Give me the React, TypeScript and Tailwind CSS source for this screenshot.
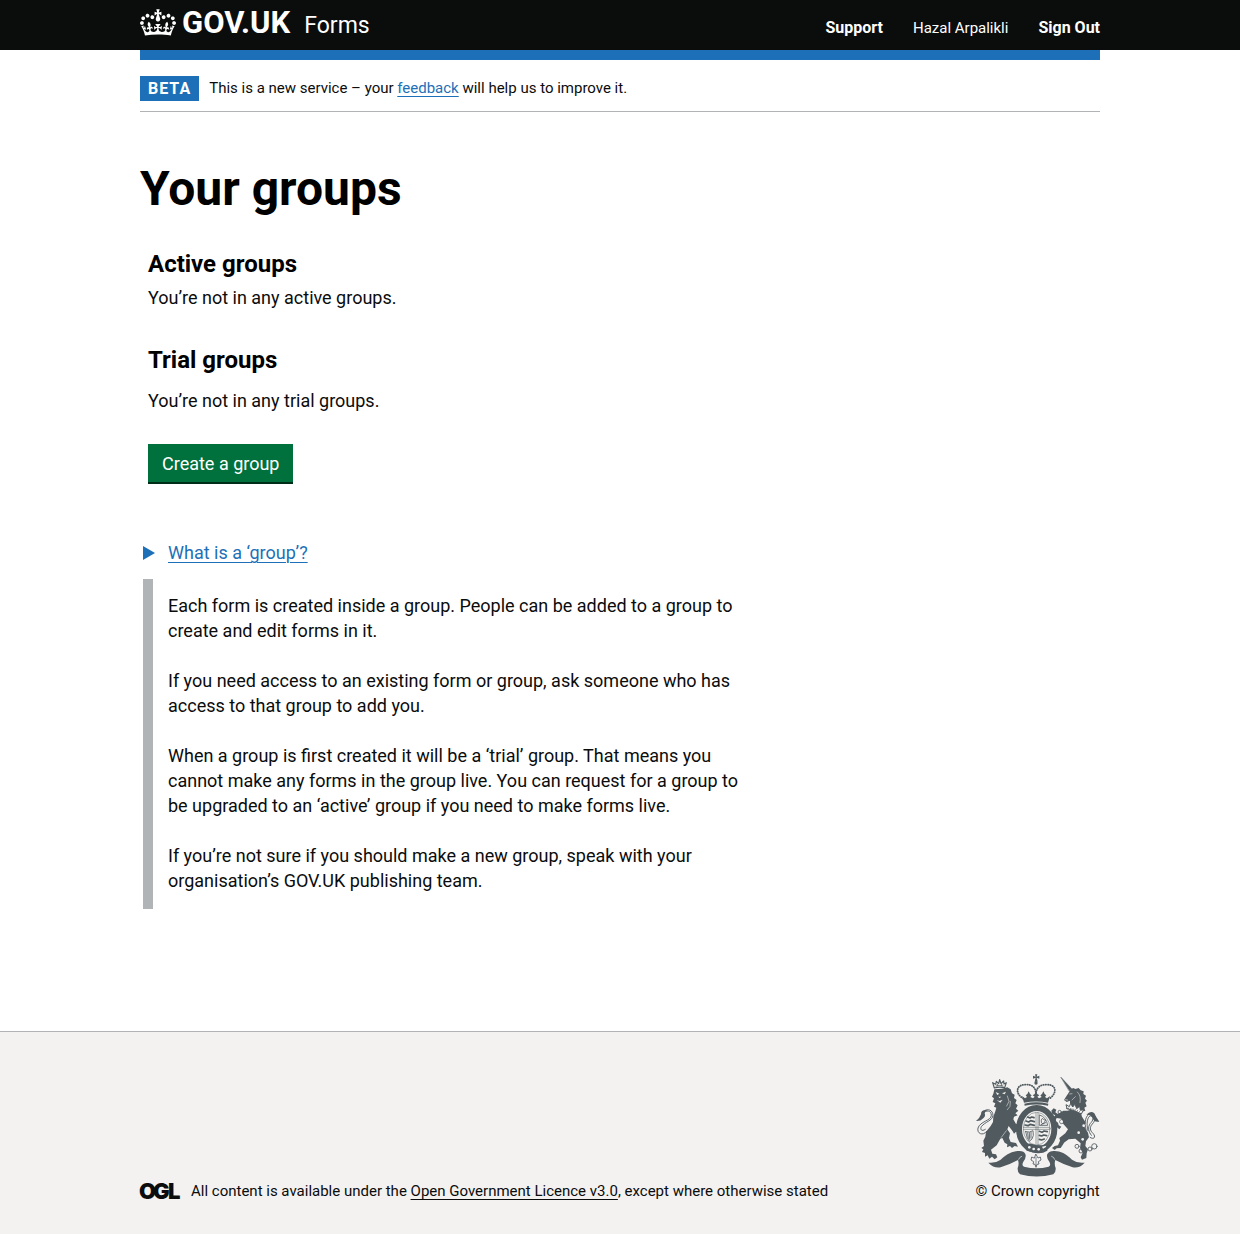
import React from "react";

function Crown() {
  return (
    <svg aria-hidden="true" viewBox="0 0 132 97" className="h-[27px] w-9 fill-white">
      <path
        fillRule="evenodd"
        d="M25 30.2c3.5 1.5 7.7-.2 9.1-3.7 1.5-3.6-.2-7.8-3.9-9.2-3.6-1.4-7.6.3-9.1 3.9-1.4 3.5.3 7.5 3.9 9zM9 39.5c3.6 1.5 7.8-.2 9.2-3.7 1.5-3.6-.2-7.8-3.9-9.1-3.6-1.5-7.6.2-9.1 3.8-1.4 3.5.3 7.5 3.8 9zM4.4 57.2c3.5 1.5 7.7-.2 9.1-3.8 1.5-3.6-.2-7.7-3.9-9.1-3.5-1.5-7.6.3-9.1 3.8-1.4 3.5.3 7.6 3.9 9.1zm38.3-21.4c3.5 1.5 7.7-.2 9.1-3.8 1.5-3.6-.2-7.7-3.9-9.1-3.6-1.5-7.6.3-9.1 3.8-1.3 3.6.4 7.7 3.9 9.1zm64.4-5.6c-3.6 1.5-7.8-.2-9.1-3.7-1.5-3.6.2-7.8 3.8-9.2 3.6-1.4 7.7.3 9.2 3.9 1.3 3.5-.4 7.5-3.9 9zm15.9 9.3c-3.6 1.5-7.7-.2-9.1-3.7-1.5-3.6.2-7.8 3.7-9.1 3.6-1.5 7.7.2 9.2 3.8 1.5 3.5-.3 7.5-3.8 9zm4.7 17.7c-3.6 1.5-7.8-.2-9.2-3.8-1.5-3.6.2-7.7 3.9-9.1 3.6-1.5 7.7.3 9.2 3.8 1.3 3.5-.4 7.6-3.9 9.1zM89.3 35.8c-3.6 1.5-7.8-.2-9.2-3.8-1.4-3.6.2-7.7 3.9-9.1 3.6-1.5 7.7.3 9.2 3.8 1.4 3.6-.3 7.7-3.9 9.1zM69.7 17.7l8.9 4.7V9.3l-8.9 2.8c-.2-.3-.5-.6-.9-.9L72.4 0H59.6l3.5 11.2c-.3.3-.6.5-.9.9l-8.8-2.8v13.1l8.8-4.7c.3.3.6.7.9.9l-5 15.4v.1c-.2.8-.4 1.6-.4 2.4 0 4.1 3.1 7.5 7 8.1h.2c.3 0 .7.1 1 .1.4 0 .7 0 1-.1h.2c4-.6 7.1-4.1 7.1-8.1 0-.8-.1-1.7-.4-2.4V34l-5.1-15.4c.4-.2.7-.6 1-.9zM66 92.8c16.9 0 32.8 1.1 47.1 3.2 4-16.9 8.9-26.7 14-33.5l-9.6-3.4c1 4.9 1.1 7.2 0 10.2-1.5-1.4-3-4.3-4.2-8.7L108.6 76c2.8-2 5-3.2 7.5-3.3-4.4 9.4-10 11.9-13.6 11.2-4.3-.8-6.3-4.6-5.6-7.9 1-4.7 5.7-5.9 8-.5 4.3-8.7-3-11.4-7.6-8.8 7.1-7.2 7.9-13.5 2.1-21.1-8 6.1-8.1 12.3-4.5 20.8-4.7-5.4-12.1-2.5-9.5 6.2 3.4-5.2 7.9-2 7.2 3.1-.6 4.3-6.4 7.8-13.5 7.2-10.3-.9-10.9-8-11.2-13.8 2.5-.5 7.1 1.8 11 7.3L80.2 60c-4.1 4.4-8 5.3-12.3 5.4 1.4-4.4 8-11.6 8-11.6H55.5s6.4 7.2 7.9 11.6c-4.2-.1-8-1-12.3-5.4l1.4 16.4c3.9-5.5 8.5-7.7 10.9-7.3-.3 5.8-.9 12.8-11.1 13.8-7.2.6-12.9-2.9-13.5-7.2-.7-5 3.8-8.3 7.1-3.1 2.7-8.7-4.6-11.6-9.4-6.2 3.7-8.5 3.6-14.7-4.6-20.8-5.8 7.6-5 13.9 2.2 21.1-4.7-2.6-11.9.1-7.7 8.8 2.3-5.5 7.1-4.2 8.1.5.7 3.3-1.3 7.1-5.7 7.9-3.5.7-9-1.8-13.5-11.2 2.5.1 4.7 1.3 7.5 3.3l-4.7-15.4c-1.2 4.4-2.7 7.2-4.3 8.7-1.1-3-.9-5.3 0-10.2l-9.5 3.4c5 6.9 9.9 16.7 14 33.5 14.8-2.1 30.8-3.2 47.7-3.2z"
      />
    </svg>
  );
}

function RoyalArms() {
  return (
    <svg aria-hidden="true" viewBox="45 40 375 309" className="h-[103px] w-[125px] text-[#505a5f]" fill="currentColor" strokeLinecap="round" strokeLinejoin="round">
      {/* crown */}
      <g>
        <path d="M225 41h7l-2 7 8-3v9l-8-3 3 12h-9l3-12-8 3v-9l8 3z" />
        <circle cx="228" cy="67" r="5" />
        <path d="M190 114C164 98 168 72 196 72C212 71 226 76 228 98C230 76 246 71 262 72C290 72 292 98 268 114" fill="none" stroke="currentColor" strokeWidth="5.5" strokeDasharray="1 6" />
        <path d="M186 106l9 7 6-4-4-5 5-4 4-8 4 8 5 4-4 5 8 4 5-5-6-4 6-4 4-9 4 9 6 4-6 4 5 5 8-4-4-5 5-4 4-8 4 8 5 4-4 5 6 4 9-7-6 20q-36-7-72 0z" />
        <path d="M193 129q36-8 72 0l-1 6q-35-7-70 0z" />
      </g>
      {/* garter and shield */}
      <ellipse cx="230" cy="205" rx="53" ry="63" fill="none" stroke="currentColor" strokeWidth="18" />
      <ellipse cx="230" cy="204" rx="40" ry="49" fill="none" stroke="currentColor" strokeWidth="1.5" />
      <g fill="none" stroke="currentColor" strokeWidth="5">
        <path d="M203 169l7 3 5-3 7 2M198 181l8 3 6-4 11 3M195 193l9 2 7-4 12 3" />
        <path d="M238 212l8 3 6-4 10 2M238 224l7 2 6-3 9 2M238 236l7 2 8-3" />
      </g>
      <path d="M228 157v94M234 157v94M191 200h78M191 206h78" fill="none" stroke="currentColor" strokeWidth="1.6" />
      <g fill="none" stroke="currentColor" strokeWidth="2.5">
        <path d="M239 163q20 6 24 31h-24zM244 185q-2-8 3-12 4 5 10 6l-7 10zM243 192l14-6" />
        <path d="M197 213q12 4 22-3l1 14q-2 13-12 18-8-9-11-29zM203 216l2 17M208 216l1 20M213 215v17" />
      </g>
      <path d="M190 255Q206 243 226 253L246 254 262 250 262 270Q246 280 228 277L200 270z" />
      <g fill="#f3f2f1">
        <circle cx="208" cy="260" r="4" /><circle cx="221" cy="265" r="4" /><circle cx="236" cy="266" r="4" />
        <path d="M246 258l13-3-2 5-8 4z" />
      </g>
      {/* motto scroll */}
      <path d="M85 306Q105 309 122 297C143 278 158 272 176 271Q192 270 196 280Q200 290 190 303Q184 314 192 318Q230 327 266 318Q274 314 268 303Q258 290 262 280Q268 270 284 271C302 272 317 278 336 297Q353 309 374 306Q358 324 338 320Q312 312 286 298Q282 310 287 322Q288 336 280 341Q230 354 180 341Q172 336 173 322Q178 310 174 298Q148 312 122 320Q102 324 85 306z" />
      <path d="M176 296q2-7 9-9M284 296q-2-7-9-9" stroke="#f3f2f1" strokeWidth="2" fill="none" />
      <path d="M228 281l6 11 7-3 2 9-8 5 2 7-6 1-3 9-3-9-6-1 2-7-8-5 2-9 7 3z" fill="#f3f2f1" stroke="currentColor" strokeWidth="2.5" />
      <path d="M228 290v25" stroke="currentColor" strokeWidth="2" />
      {/* lion */}
      <path d="M103 86L100 99 96 108 102 113 98 124 106 128 102 138 109 141 106 152 100 168 99 184 92 196 78 213 76 228 70 240 72 256 64 262 70 266 66 274 75 277 75 288 83 284 88 294 96 288 104 296 112 290 108 281 97 279 93 267 110 254 121 234 127 232 134 246 142 251 141 260 150 256 156 262 164 256 174 258 168 247 152 244 147 232 150 218 142 206 146 196 158 212 162 219 168 213 182 214 172 206 182 202 172 197 180 190 168 190 160 176 162 168 173 164 166 158 175 150 168 144 173 134 166 128 170 118 162 112 164 102 156 98 152 86 142 80 126 84z" />
      <path d="M107 94l11 5-6 4zM126 98l12-5-4 8zM115 108l4 4 5-4M110 118l8 3 10-4-7 9z" fill="#f3f2f1" />
      <path d="M142 106l5 16-7 14M151 122l-1 15-8 10M124 230l15-20" fill="none" stroke="#f3f2f1" strokeWidth="1.6" />
      <path d="M103 82L98 66 107 71 109 62 116 69 119 57 123 69 131 61 132 70 139 66 134 81Q118 77 103 82z" fill="#f3f2f1" stroke="currentColor" strokeWidth="3.5" />
      <path d="M108 76q11-3 21 0M112 71v4M125 71v4" stroke="currentColor" strokeWidth="2.5" fill="none" />
      <path d="M80 212C68 228 50 218 54 202C60 182 94 180 94 164C94 150 80 146 68 158M76 206C64 214 60 206 64 198C74 184 98 180 99 164C98 148 84 143 74 150" fill="none" stroke="currentColor" strokeWidth="2.8" />
      <path d="M83 148Q62 146 63 161Q60 171 48 181Q62 182 68 174Q78 168 74 158Q75 151 83 148z" />
      {/* unicorn */}
      <path d="M303 50L335 84 328 90z" stroke="currentColor" strokeWidth="1.5" />
      <path d="M332 86L340 82 346 85 356 82 362 89 371 92 370 100 378 105 375 114 381 120 376 126 380 137 373 141 376 150 362 154 366 168 376 184 374 200 384 216 387 230 378 242 376 256 384 266 380 278 379 292 366 297 362 290 368 276 360 262 362 248 346 234 326 236 312 246 310 250 302 262 290 263 284 268 276 262 284 256 294 254 300 240 298 232 316 218 324 206 310 190 304 174 290 172 286 180 294 186 296 194 304 198 298 206 290 199 285 190 277 181 278 172 286 164 277 160 274 150 281 143 289 147 286 155 292 159 300 157 310 150 322 150 330 148 330 120 320 124 312 118 318 108 325 98z" />
      <path d="M329 100l7-1M316 117l7 1M336 118l10-10M352 94q12 10 8 32" stroke="#f3f2f1" strokeWidth="1.6" fill="none" />
      <path d="M321 144L318 132 328 138 332 128 338 139 345 131 350 144 359 137 361 149 371 147 364 160Q344 148 321 144z" fill="#f3f2f1" stroke="currentColor" strokeWidth="3" />
      <path d="M325 143q20 2 37 12" stroke="currentColor" strokeWidth="3" strokeDasharray="1 6" fill="none" />
      <path d="M378 206C372 188 376 160 394 158C408 160 408 180 397 190C388 200 390 210 399 218C410 230 400 238 390 230M384 210C378 190 382 166 393 165C402 168 400 180 391 188C382 200 386 214 394 224" fill="none" stroke="currentColor" strokeWidth="2.8" />
      <path d="M379 162Q392 148 403 158Q408 170 418 183Q402 186 398 172Q392 161 379 162z" />
      <g fill="none" stroke="currentColor" strokeWidth="2.6">
        <circle cx="299" cy="154" r="5" /><circle cx="305" cy="183" r="6" /><circle cx="351" cy="257" r="6" /><circle cx="363" cy="271" r="6" /><circle cx="390" cy="265" r="6" /><circle cx="403" cy="257" r="8" />
      </g>
      <g fill="#f3f2f1"><circle cx="305" cy="183" r="4" /><circle cx="371" cy="195" r="4" /><circle cx="356" cy="216" r="4" /><circle cx="368" cy="236" r="4" /></g>
    </svg>
  );
}

const explanation = [
  "Each form is created inside a group. People can be added to a group to create and edit forms in it.",
  "If you need access to an existing form or group, ask someone who has access to that group to add you.",
  "When a group is first created it will be a ‘trial’ group. That means you cannot make any forms in the group live. You can request for a group to be upgraded to an ‘active’ group if you need to make forms live.",
  "If you’re not sure if you should make a new group, speak with your organisation’s GOV.UK publishing team.",
];

const container = "mx-auto w-full max-w-[1020px] px-[30px]";
const underlined = "underline decoration-1 underline-offset-3";

export default function App() {
  return (
    <div className="flex min-h-screen flex-col bg-white font-['Roboto',sans-serif] text-lg leading-[25px] text-[#0b0c0c]">
      <header className="bg-[#0b0c0c] text-white">
        <div className={container}>
          <div className="flex h-[50px] items-center justify-between">
            <a href="#" className="flex items-center gap-[6px] pb-[6px]">
              <Crown />
              <span className="flex items-baseline gap-[14px] pt-1">
                <span className="text-[31px] leading-8 font-bold">GOV.UK</span>
                <span className="text-[23px] leading-8">Forms</span>
              </span>
            </a>
            <nav className="flex items-baseline gap-[30px] pt-[6px] text-base font-bold">
              <a href="#">Support</a>
              <span className="text-[15px] font-normal">Hazal Arpalikli</span>
              <a href="#">Sign Out</a>
            </nav>
          </div>
        </div>
      </header>

      <div className={container}>
        <div className="border-t-10 border-[#1d70b8]" />
        <div className="flex items-center gap-[10px] border-b border-[#b1b4b6] pt-4 pb-[10px] text-[15px]">
          <strong className="bg-[#1d70b8] px-2 text-base leading-[25px] tracking-[1px] text-white">BETA</strong>
          <span>
            This is a new service – your <a href="#" className={`${underlined} text-[#1d70b8]`}>feedback</a> will help us to improve it.
          </span>
        </div>
      </div>

      <main className={`${container} grow pt-[52px] pb-[122px]`}>
        <h1 className="text-5xl leading-[50px] font-bold text-black">Your groups</h1>
        <div className="pt-[35px] pl-2">
          <h2 className="text-2xl leading-[30px] font-bold text-black">Active groups</h2>
          <p className="pt-[6px]">You’re not in any active groups.</p>
          <h2 className="pt-[35px] text-2xl leading-[30px] font-bold text-black">Trial groups</h2>
          <p className="pt-[13px]">You’re not in any trial groups.</p>
          <button type="button" className="mt-[31px] block border-b-2 border-[#002d18] bg-[#00703c] px-[14px] pt-[7px] pb-[6px] text-white">
            Create a group
          </button>
        </div>
        <details open className="mt-14 ml-[3px] max-w-[610px]">
          <summary className="flex cursor-pointer list-none items-center gap-[13px] text-[#1d70b8]">
            <svg aria-hidden="true" viewBox="0 0 12 14" className="h-[14px] w-3 fill-current">
              <path d="M0 0l12 7-12 7z" />
            </svg>
            <span className={underlined}>What is a ‘group’?</span>
          </summary>
          <div className="mt-[14px] flex flex-col gap-[25px] border-l-10 border-[#b1b4b6] pt-[14px] pb-4 pl-[15px]">
            {explanation.map((text) => (
              <p key={text}>{text}</p>
            ))}
          </div>
        </details>
      </main>

      <footer className="border-t border-[#b1b4b6] bg-[#f3f2f1] pt-[42px] pb-[30px] text-[15px]">
        <div className={`${container} flex items-end justify-between gap-6`}>
          <div className="flex items-center gap-[10px]">
            <svg aria-hidden="true" viewBox="0 0 41 17" className="h-[17px] w-[41px] shrink-0 overflow-visible fill-[#0b0c0c] font-['Inter',sans-serif] text-[22px] font-black">
              <text x="-1 13 28" y="16">OGL</text>
            </svg>
            <span>
              All content is available under the <a href="#" className={underlined}>Open Government Licence v3.0</a>, except where otherwise stated
            </span>
          </div>
          <a href="#" className="flex flex-col items-center gap-[2px] whitespace-nowrap">
            <RoyalArms />
            <span>© Crown copyright</span>
          </a>
        </div>
      </footer>
    </div>
  );
}
